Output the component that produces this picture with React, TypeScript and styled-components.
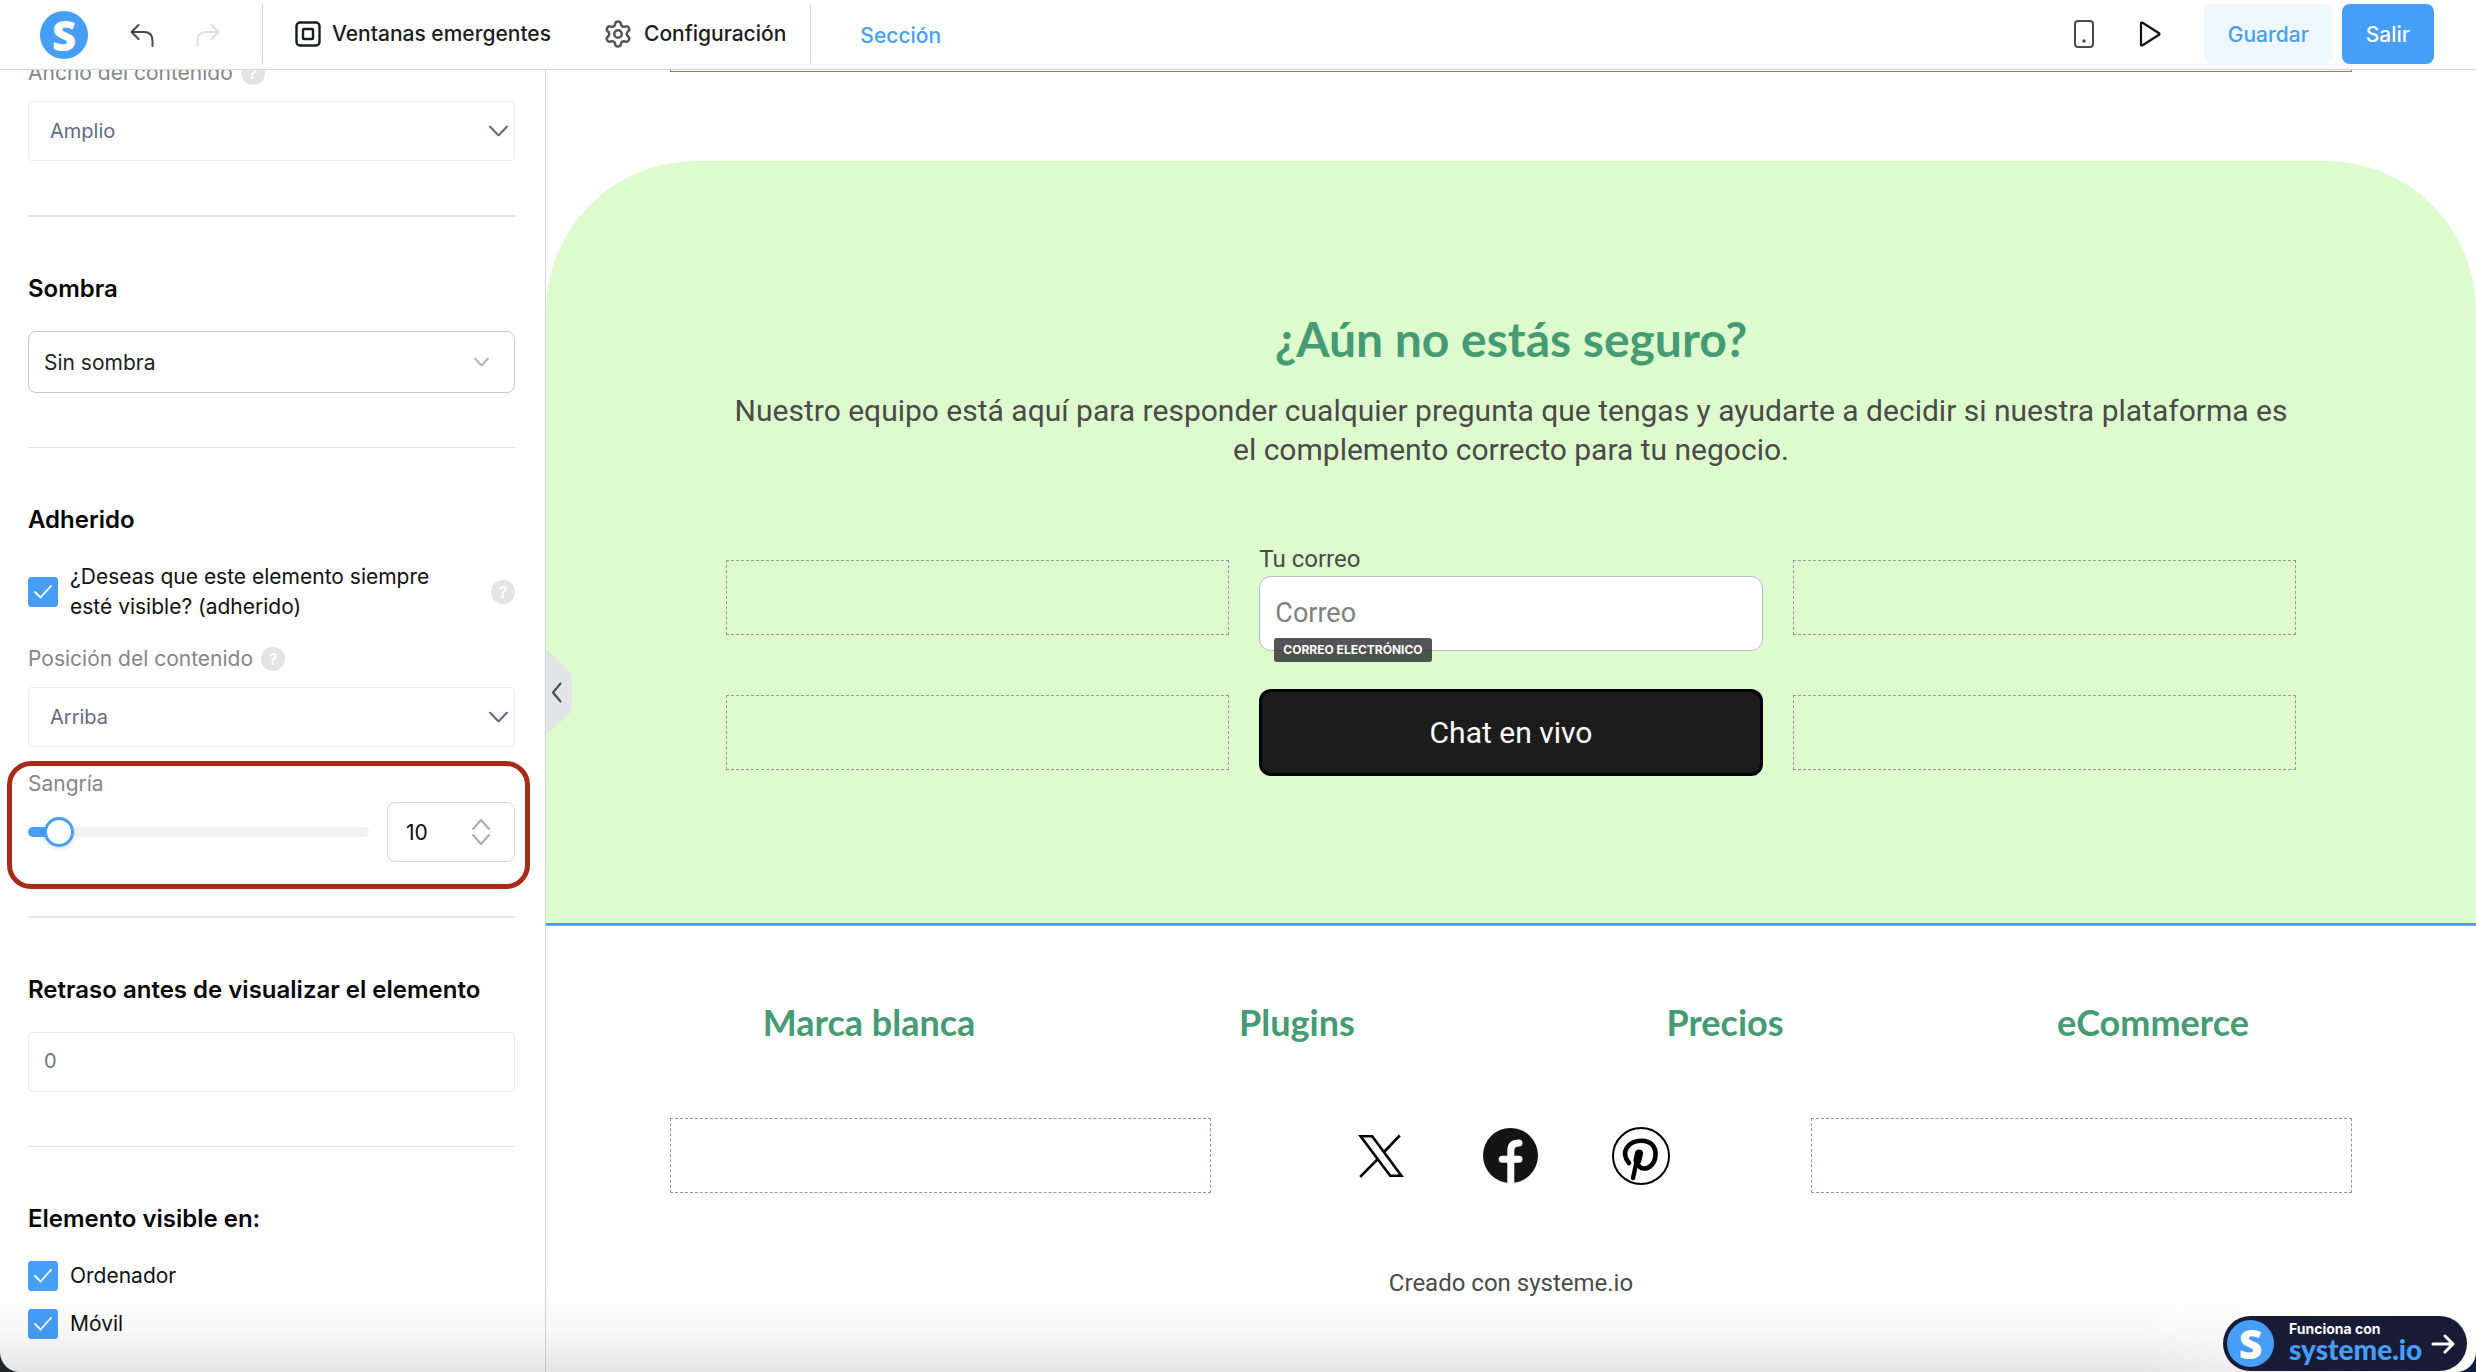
import React, { useState } from "react";
import styled, { createGlobalStyle, css } from "styled-components";
import { Settings } from "lucide-react";

const ui = `Inter, "Liberation Sans", sans-serif`;
const body = `Roboto, "Liberation Sans", sans-serif`;
const display = `Lato, "Liberation Sans", sans-serif`;
const blue = "#479ef9";
const line = "#d4d6d8";

const GlobalStyle = createGlobalStyle`
  * { box-sizing: border-box; }
  body { margin: 0; background: linear-gradient(90deg, #23252b 50%, #0c1c44); font-family: ${ui}; }
  button, input, select { font-family: inherit; margin: 0; }
  h2, h3, p { margin: 0; }
`;

const Shell = styled.div`
  position: relative;
  display: flex;
  flex-direction: column;
  height: 100vh;
  overflow: hidden;
  background: #fff;
  border-radius: 0 0 20px 20px;
`;

/* ---------- Top bar ---------- */

const TopBar = styled.header`
  display: flex;
  flex: none;
  align-items: stretch;
  height: 70px;
  padding: 0 42px 0 40px;
  border-bottom: 1px solid ${line};
`;

const Group = styled.div<{ $gap: number; $pad?: string }>`
  display: flex;
  align-items: center;
  gap: ${(p) => p.$gap}px;
  padding: ${(p) => p.$pad ?? "0"};
`;

const Rule = styled.span`
  width: 1px;
  margin: 4px 0 6px;
  background: ${line};
`;

const Brand = styled.a<{ $size: number }>`
  display: flex;
  flex: none;
  align-items: center;
  justify-content: center;
  width: ${(p) => p.$size}px;
  height: ${(p) => p.$size}px;
  border-radius: 50%;
  background: ${blue};
  color: #fff;
  font: 900 ${(p) => p.$size - 6}px/1 "Open Sans", sans-serif;
  text-decoration: none;
`;

const BareButton = styled.button`
  display: flex;
  align-items: center;
  gap: 11px;
  padding: 0;
  border: 0;
  background: none;
  color: #1b1c1e;
  font-size: 21px;
  font-weight: 500;
  line-height: 30px;
  cursor: pointer;
`;

const Crumb = styled.a`
  display: flex;
  align-items: center;
  padding: 2px 0 0 49px;
  color: ${blue};
  font-size: 21px;
  font-weight: 500;
  text-decoration: none;
`;

const Spacer = styled.span`
  flex: 1;
`;

const ActionButton = styled.button<{ $primary?: boolean }>`
  height: 60px;
  padding: 0 24px;
  border: 0;
  border-radius: 8px;
  font-size: 21px;
  font-weight: 500;
  cursor: pointer;
  ${(p) =>
    p.$primary
      ? css`
          background: ${blue};
          color: #fff;
        `
      : css`
          background: #f0f8ff;
          color: ${blue};
        `}
`;

/* ---------- Side panel ---------- */

const Main = styled.div`
  display: flex;
  flex: 1;
  min-height: 0;
`;

const Panel = styled.aside`
  flex: none;
  width: 546px;
  padding: 0 30px 0 28px;
  overflow: hidden;
  border-right: 1px solid ${line};
`;

const PanelScroll = styled.div`
  margin-top: -12px;
`;

const PanelGroup = styled.section<{ $thick?: boolean; $last?: boolean }>`
  padding-bottom: 54px;
  margin-bottom: 56px;
  border-bottom: ${(p) => (p.$last ? 0 : p.$thick ? 2 : 1)}px solid #e3e3e4;
`;

const PanelTitle = styled.h3`
  margin-bottom: 26px;
  color: #060606;
  font-size: 24px;
  font-weight: 600;
  line-height: 32px;
`;

const Field = styled.div<{ $tight?: boolean }>`
  position: relative;
  display: flex;
  flex-direction: column;
  gap: ${(p) => (p.$tight ? 3 : 13)}px;
  & + & {
    margin-top: 22px;
  }
`;

const LabelRow = styled.div`
  display: flex;
  align-items: center;
  gap: 8px;
`;

const FieldLabel = styled.label`
  color: #85868b;
  font-size: 21px;
  line-height: 30px;
`;

const Help = styled.button`
  flex: none;
  width: 24px;
  height: 24px;
  padding: 0;
  border: 0;
  border-radius: 50%;
  background: #e2e3e5;
  color: #fff;
  font-size: 16px;
  font-weight: 700;
  line-height: 24px;
`;

const SelectWrap = styled.div<{ $inset: number }>`
  position: relative;
  svg {
    position: absolute;
    top: 50%;
    right: ${(p) => p.$inset}px;
    transform: translateY(-50%);
    pointer-events: none;
  }
`;

const Select = styled.select<{ $strong?: boolean }>`
  display: block;
  width: 100%;
  height: ${(p) => (p.$strong ? 62 : 60)}px;
  padding: 0 ${(p) => (p.$strong ? 15 : 21)}px;
  border: 1px solid ${(p) => (p.$strong ? "#c6c7c9" : "#ebebec")};
  border-radius: ${(p) => (p.$strong ? 8 : 4)}px;
  appearance: none;
  background: #fff;
  color: ${(p) => (p.$strong ? "#222326" : "#5f6b85")};
  font-size: ${(p) => (p.$strong ? 21 : 20)}px;
`;

const TextInput = styled.input`
  width: 100%;
  height: 60px;
  padding: 0 15px 2px;
  border: 1px solid #e8e9ed;
  border-radius: 4px;
  color: #6b7690;
  font-size: 20px;
`;

const CheckLabel = styled.label`
  display: flex;
  flex: 1;
  align-items: center;
  gap: 12px;
  color: #111;
  font-size: 21px;
  line-height: 30px;
`;

const CheckRow = styled.div`
  display: flex;
  align-items: center;
  margin-bottom: 22px;
  gap: 48px;
`;

const CheckList = styled.div`
  display: flex;
  flex-direction: column;
  gap: 18px;
`;

const Tick = styled.span`
  position: relative;
  flex: none;
  width: 30px;
  height: 30px;
  input {
    display: block;
    width: 30px;
    height: 30px;
    margin: 0;
    border: 1px solid ${blue};
    border-radius: 3px;
    appearance: none;
    background: #fff;
  }
  input:checked {
    background: ${blue};
  }
  svg {
    position: absolute;
    inset: 0;
    pointer-events: none;
  }
`;

const SliderRow = styled.div`
  display: flex;
  align-items: center;
  gap: 18px;
`;

const Slider = styled.input`
  flex: 1;
  min-width: 0;
  height: 30px;
  margin: 0;
  appearance: none;
  background: none;
  &::-webkit-slider-runnable-track {
    height: 10px;
    border-radius: 5px;
    background: linear-gradient(${blue}, ${blue}) 0 0 / var(--fill) 100% no-repeat #f1f1f2;
  }
  &::-webkit-slider-thumb {
    width: 30px;
    height: 30px;
    margin-top: -10px;
    border: 3px solid ${blue};
    border-radius: 50%;
    appearance: none;
    background: #fff;
    box-shadow: 0 2px 4px rgba(0, 0, 0, 0.12);
  }
`;

const Stepper = styled.div`
  display: flex;
  align-items: center;
  justify-content: space-between;
  width: 128px;
  height: 60px;
  padding: 0 24px 0 18px;
  border: 1px solid #d3d4d6;
  border-radius: 8px;
  input {
    width: 50px;
    padding: 0;
    border: 0;
    outline: 0;
    background: none;
    color: #0c0c0c;
    font-size: 21px;
    appearance: textfield;
  }
  input::-webkit-inner-spin-button {
    appearance: none;
  }
`;

const StepButtons = styled.div`
  display: flex;
  flex-direction: column;
  gap: 4px;
`;

const StepButton = styled.button`
  display: flex;
  padding: 0;
  border: 0;
  background: none;
`;

const Callout = styled.div`
  position: absolute;
  inset: -8px -15px -27px -21px;
  border: 5px solid #a62b18;
  border-radius: 24px;
  pointer-events: none;
`;

/* ---------- Canvas ---------- */

const Canvas = styled.main`
  position: relative;
  flex: 1;
  min-width: 0;
  overflow: hidden;
  color: #4a4a4a;
  font-family: ${body};
`;

const Column = styled.div<{ $inner?: boolean }>`
  width: ${(p) => (p.$inner ? "calc(100% - 360px)" : "calc(100% - 248px)")};
  max-width: ${(p) => (p.$inner ? 1570 : 1682)}px;
  margin: 0 auto;
`;

const PreviousSection = styled(Column)`
  height: 2px;
  margin-bottom: 89px;
  border: 1px solid #d9644f;
  border-top: 0;
`;

const Hero = styled.section`
  padding: 149px 0 147px;
  border-radius: 150px 150px 0 0;
  background: #defbcd;
  text-align: center;
`;

const SectionEdge = styled.div`
  height: 3px;
  border-bottom: 1px solid #6fb7a0;
  background: ${blue};
`;

const HeroTitle = styled.h2`
  margin-bottom: 23px;
  color: #459b74;
  font: 700 48px/58px ${display};
`;

const HeroText = styled.p`
  margin-bottom: 75px;
  font-size: 30px;
  line-height: 39px;
`;

const Row = styled.div<{ $cols: number }>`
  display: grid;
  grid-template-columns: repeat(${(p) => p.$cols}, minmax(0, 1fr));
  align-items: center;
  gap: 30px;
`;

const FormRows = styled.div`
  display: flex;
  flex-direction: column;
  gap: 38px;
`;

const DropZone = styled.div`
  height: 75px;
  border: 1px dashed #8f999d;
`;

const EmailField = styled.div`
  position: relative;
  text-align: left;
  label {
    display: block;
    margin-bottom: 2px;
    font-size: 24px;
    line-height: 30px;
  }
  input {
    display: block;
    width: 100%;
    height: 75px;
    padding: 0 15px 2px;
    border: 1px solid #b3b8cc;
    border-radius: 12px;
    background: #fff;
    font-size: 27px;
  }
  input::placeholder {
    color: #808080;
  }
`;

const TypeTag = styled.span`
  position: absolute;
  bottom: -11px;
  left: 15px;
  padding: 0 9px;
  border-radius: 3px;
  background: rgba(32, 32, 34, 0.76);
  color: #fff;
  font: 700 12px/24px ${ui};
`;

const ChatButton = styled.button`
  width: 100%;
  height: 87px;
  border: 3px solid #000;
  border-radius: 12px;
  background: #1c1c1c;
  color: #fff;
  font-size: 30px;
`;

const Footer = styled.footer`
  padding-top: 74px;
  text-align: center;
`;

const FooterStack = styled(Column)`
  display: flex;
  flex-direction: column;
  gap: 74px;
`;

const FooterTitle = styled.h3`
  color: #459b74;
  font: 700 36px/44px ${display};
`;

const Socials = styled.div`
  display: grid;
  grid-template-columns: repeat(3, 60px);
  justify-content: center;
  gap: 70px;
  a {
    display: flex;
    justify-content: center;
    align-items: center;
  }
`;

const Credit = styled.p`
  font-size: 24px;
  line-height: 32px;
`;

const CollapseButton = styled.button`
  position: absolute;
  top: 580px;
  left: 0;
  padding: 0;
  border: 0;
  background: none;
  svg {
    display: block;
  }
`;

const BottomFade = styled.div`
  position: absolute;
  right: 0;
  bottom: 0;
  left: 0;
  height: 80px;
  background: linear-gradient(rgba(0, 0, 0, 0), rgba(0, 0, 0, 0.03) 50%, rgba(0, 0, 0, 0.1));
  mask-image: linear-gradient(90deg, #000 calc(100% - 340px), transparent calc(100% - 60px));
  pointer-events: none;
`;

const PoweredBy = styled.a`
  position: absolute;
  right: 9px;
  bottom: 1px;
  display: flex;
  align-items: center;
  width: 244px;
  height: 55px;
  padding: 0 12px 0 4px;
  border-radius: 28px;
  background: #181b36;
  color: #fff;
  text-decoration: none;
`;

const PoweredText = styled.span`
  display: flex;
  flex: 1;
  flex-direction: column;
  padding: 0 0 5px 15px;
  font: 700 14px/16px ${ui};
  strong {
    color: ${blue};
    font: 900 28px/24px ${display};
  }
`;

/* ---------- Icons ---------- */

const stroke = { fill: "none", strokeLinecap: "round", strokeLinejoin: "round" } as const;

const Chevron = ({ w, h, color, up }: { w: number; h: number; color: string; up?: boolean }) => (
  <svg width={w} height={h} viewBox={`0 0 ${w} ${h}`} {...stroke} stroke={color} strokeWidth={2}>
    <path d={up ? `M1 ${h - 1}L${w / 2} 1L${w - 1} ${h - 1}` : `M1 1L${w / 2} ${h - 1}L${w - 1} 1`} />
  </svg>
);

const TurnArrow = ({ flip, color }: { flip?: boolean; color: string }) => (
  <svg width="24" height="24" viewBox="0 0 24 24" {...stroke} stroke={color} strokeWidth={2}>
    <path transform={flip ? "translate(24 0) scale(-1 1)" : undefined} d="M8.500 2L1.500 9L8.500 16M1.500 9H14Q22.500 9 22.500 17.500V23" />
  </svg>
);

const PopupIcon = () => (
  <svg width="26" height="26" viewBox="0 0 26 26" {...stroke} stroke="#1b1c1e" strokeWidth={2.4}>
    <rect x="1.500" y="1.500" width="23" height="23" rx="3.500" />
    <rect x="8" y="8" width="10" height="10" rx="1" />
  </svg>
);

const PhoneIcon = () => (
  <svg width="22" height="28" viewBox="0 0 22 28" {...stroke} stroke="#4b4c50" strokeWidth={2}>
    <rect x="2" y="1" width="18" height="26" rx="3" />
    <circle cx="11" cy="21" r="1" fill="#4b4c50" strokeWidth={1.500} />
  </svg>
);

const PlayIcon = () => (
  <svg width="22" height="26" viewBox="0 0 22 26" {...stroke} stroke="#111" strokeWidth={2.2}>
    <path d="M2 2.600V23.400Q2 25 3.600 24.200L20 13.800Q21 13 20 12.200L3.600 1.800Q2 1 2 2.600Z" />
  </svg>
);

const XIcon = () => (
  <svg width="46" height="44" viewBox="0 0 46 44" fill="none" stroke="#000" strokeWidth={2.600}>
    <path d="M2.600 2.300H14.200L43.400 41.700H32.200ZM41.800 1.500L25.500 18.500M19.800 25L2.200 42.800" />
  </svg>
);

const FacebookIcon = () => (
  <svg width="55" height="55" viewBox="0 0 55 55">
    <circle cx="27.500" cy="27.500" r="27.500" fill="#141414" />
    <path d="M27.800 56V22.500Q27.800 15 36 15M19.200 31.200H36" {...stroke} stroke="#fff" strokeWidth={7} />
  </svg>
);

const PinterestIcon = () => (
  <svg width="58" height="58" viewBox="0 0 58 58" {...stroke} stroke="#000">
    <circle cx="29" cy="29" r="28" strokeWidth={2} />
    <path d="M17 36C7.500 24.500 17 13.800 29.500 13.800C39.500 13.800 44 20.500 43.500 28C43 36.500 37.500 42 31.500 41.500C28.500 41.200 26.800 39.500 26 37.500" strokeWidth={4.600} />
    <path d="M26.300 27L21 51" strokeWidth={4.400} />
    <path d="M27 26.500L25.500 33" strokeWidth={8} />
  </svg>
);

const HandleIcon = () => (
  <svg width="27" height="84" viewBox="0 0 27 84">
    <path d="M0 0L19 17Q26 23 26 31V55Q26 62 19 68L0 84Z" fill="#e2e4e6" />
    <path d="M14.500 33.500L7 42.500L14.500 51.500" {...stroke} stroke="#45474b" strokeWidth={2} />
  </svg>
);

const ArrowIcon = () => (
  <svg width="24" height="20" viewBox="0 0 24 20" {...stroke} stroke="#fff" strokeWidth={3}>
    <path d="M2 10H22M14 2L22 10L14 18" />
  </svg>
);

/* ---------- Parts ---------- */

const CheckBox = ({ label }: { label: string }) => {
  const [on, setOn] = useState(true);
  return (
    <CheckLabel>
      <Tick>
        <input type="checkbox" checked={on} onChange={() => setOn(!on)} />
        {on && (
          <svg width="30" height="30" viewBox="0 0 30 30" {...stroke} stroke="#fff" strokeWidth={1.800}>
            <path d="M7 15L12.500 20.500L23 9" />
          </svg>
        )}
      </Tick>
      <span>{label}</span>
    </CheckLabel>
  );
};

const LabelledSelect = ({ id, label, value }: { id: string; label: string; value: string }) => (
  <Field>
    <LabelRow>
      <FieldLabel htmlFor={id}>{label}</FieldLabel>
      <Help aria-label="Ayuda">?</Help>
    </LabelRow>
    <SelectWrap $inset={7}>
      <Select id={id}>
        <option>{value}</option>
      </Select>
      <Chevron w={19} h={11} color="#5f6b85" />
    </SelectWrap>
  </Field>
);

const MAX_INDENT = 200;

const IndentField = () => {
  const [value, setValue] = useState(10);
  const fill = `calc(15px + (100% - 30px) * ${value / MAX_INDENT})`;
  return (
    <Field $tight>
      <FieldLabel htmlFor="indent">Sangría</FieldLabel>
      <SliderRow>
        <Slider
          id="indent"
          type="range"
          min={0}
          max={MAX_INDENT}
          value={value}
          onChange={(e) => setValue(Number(e.target.value))}
          style={{ "--fill": fill } as React.CSSProperties}
        />
        <Stepper>
          <input type="number" aria-label="Sangría" value={value} onChange={(e) => setValue(Number(e.target.value))} />
          <StepButtons>
            <StepButton aria-label="Aumentar" onClick={() => setValue(value + 1)}>
              <Chevron w={18} h={11} color="#a9aaad" up />
            </StepButton>
            <StepButton aria-label="Reducir" onClick={() => setValue(value - 1)}>
              <Chevron w={18} h={11} color="#a9aaad" />
            </StepButton>
          </StepButtons>
        </Stepper>
      </SliderRow>
      <Callout />
    </Field>
  );
};

export default function App() {
  return (
    <>
      <GlobalStyle />
      <Shell>
        <TopBar>
          <Group $gap={42} $pad="0 42px 0 0">
            <Brand $size={48} href="#">S</Brand>
            <BareButton aria-label="Deshacer"><TurnArrow color="#45474b" /></BareButton>
            <BareButton aria-label="Rehacer"><TurnArrow flip color="#dcdde0" /></BareButton>
          </Group>
          <Rule />
          <Group $gap={52} $pad="0 24px 2px 32px">
            <BareButton><PopupIcon />Ventanas emergentes</BareButton>
            <BareButton><Settings size={30} color="#55565b" />Configuración</BareButton>
          </Group>
          <Rule />
          <Crumb href="#">Sección</Crumb>
          <Spacer />
          <Group $gap={44} $pad="0 43px 2px 0">
            <BareButton aria-label="Vista móvil"><PhoneIcon /></BareButton>
            <BareButton aria-label="Vista previa"><PlayIcon /></BareButton>
          </Group>
          <Group $gap={9} $pad="0 0 1px 0">
            <ActionButton>Guardar</ActionButton>
            <ActionButton $primary>Salir</ActionButton>
          </Group>
        </TopBar>

        <Main>
          <Panel>
            <PanelScroll>
              <PanelGroup $thick>
                <LabelledSelect id="width" label="Ancho del contenido" value="Amplio" />
              </PanelGroup>
              <PanelGroup>
                <PanelTitle>Sombra</PanelTitle>
                <SelectWrap $inset={26}>
                  <Select $strong aria-label="Sombra">
                    <option>Sin sombra</option>
                  </Select>
                  <Chevron w={15} h={9} color="#b4b5b8" />
                </SelectWrap>
              </PanelGroup>
              <PanelGroup $thick>
                <PanelTitle>Adherido</PanelTitle>
                <CheckRow>
                  <CheckBox label="¿Deseas que este elemento siempre esté visible? (adherido)" />
                  <Help aria-label="Ayuda">?</Help>
                </CheckRow>
                <LabelledSelect id="position" label="Posición del contenido" value="Arriba" />
                <IndentField />
              </PanelGroup>
              <PanelGroup>
                <PanelTitle>Retraso antes de visualizar el elemento</PanelTitle>
                <TextInput aria-label="Retraso antes de visualizar el elemento" defaultValue="0" />
              </PanelGroup>
              <PanelGroup $last>
                <PanelTitle>Elemento visible en:</PanelTitle>
                <CheckList>
                  <CheckBox label="Ordenador" />
                  <CheckBox label="Móvil" />
                </CheckList>
              </PanelGroup>
            </PanelScroll>
          </Panel>

          <Canvas>
            <PreviousSection />
            <Hero>
              <Column $inner>
                <HeroTitle>¿Aún no estás seguro?</HeroTitle>
                <HeroText>
                  Nuestro equipo está aquí para responder cualquier pregunta que tengas y ayudarte a decidir si nuestra
                  plataforma es el complemento correcto para tu negocio.
                </HeroText>
                <FormRows>
                  <Row $cols={3}>
                    <DropZone />
                    <EmailField>
                      <label htmlFor="email">Tu correo</label>
                      <input id="email" type="email" placeholder="Correo" />
                      <TypeTag>CORREO ELECTRÓNICO</TypeTag>
                    </EmailField>
                    <DropZone />
                  </Row>
                  <Row $cols={3}>
                    <DropZone />
                    <ChatButton>Chat en vivo</ChatButton>
                    <DropZone />
                  </Row>
                </FormRows>
              </Column>
            </Hero>
            <SectionEdge />
            <Footer>
              <FooterStack>
                <Row $cols={4}>
                  {["Marca blanca", "Plugins", "Precios", "eCommerce"].map((title) => (
                    <FooterTitle key={title}>{title}</FooterTitle>
                  ))}
                </Row>
                <Row $cols={3}>
                  <DropZone />
                  <Socials>
                    <a href="#" aria-label="X"><XIcon /></a>
                    <a href="#" aria-label="Facebook"><FacebookIcon /></a>
                    <a href="#" aria-label="Pinterest"><PinterestIcon /></a>
                  </Socials>
                  <DropZone />
                </Row>
                <Credit>Creado con systeme.io</Credit>
              </FooterStack>
            </Footer>
            <CollapseButton aria-label="Contraer panel"><HandleIcon /></CollapseButton>
          </Canvas>
        </Main>
        <BottomFade />
        <PoweredBy href="#">
          <Brand as="span" $size={47}>S</Brand>
          <PoweredText>
            Funciona con
            <strong>systeme.io</strong>
          </PoweredText>
          <ArrowIcon />
        </PoweredBy>
      </Shell>
    </>
  );
}
